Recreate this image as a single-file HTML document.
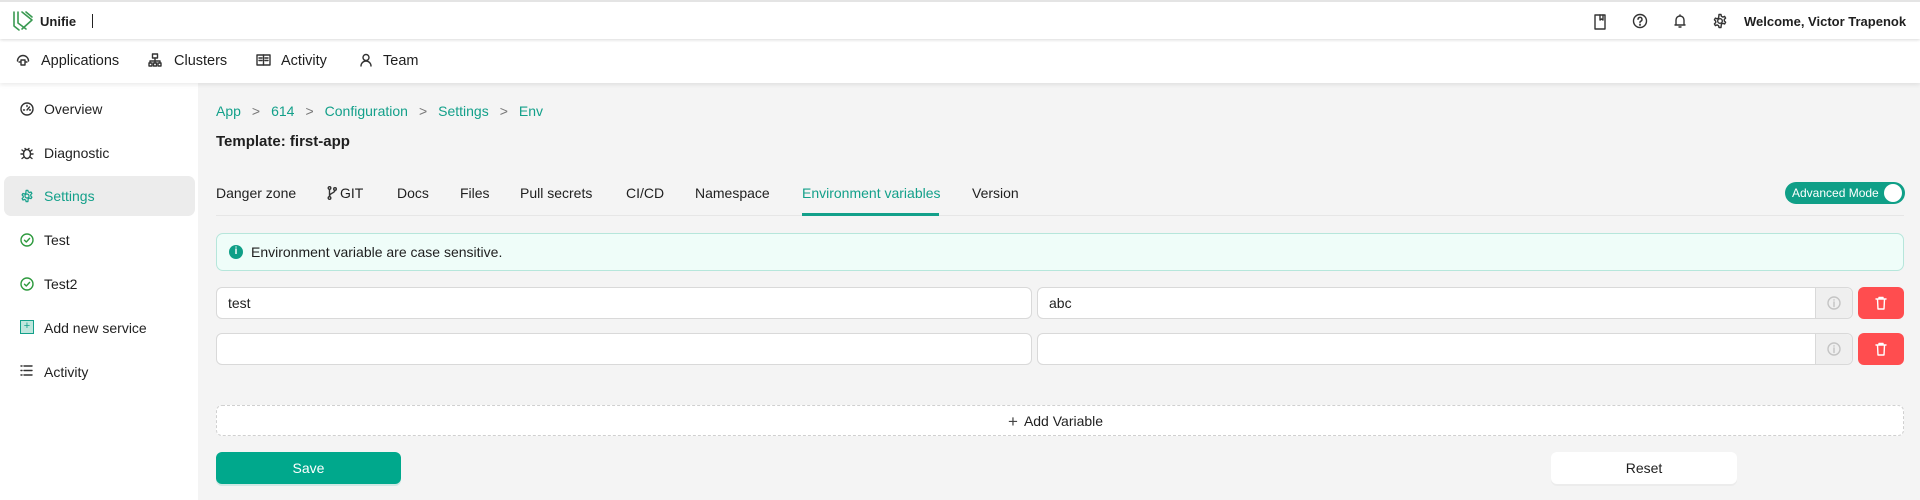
<!DOCTYPE html>
<html><head><meta charset="utf-8"><style>
*{box-sizing:border-box;margin:0;padding:0}
body{width:1920px;height:500px;overflow:hidden;background:#f4f4f4;font-family:"Liberation Sans",Arial,sans-serif;color:#1f1f1f;font-size:14px;position:relative}
.a{position:absolute}
.top{left:0;top:0;width:1920px;height:39px;background:#fff;border-top:2px solid #e4e4e4;box-shadow:0 1px 3px rgba(0,0,0,.15);z-index:3}
.nav{left:0;top:39px;width:1920px;height:44px;background:#fff;box-shadow:0 2px 4px rgba(0,0,0,.08);z-index:2}
.side{left:0;top:83px;width:198px;height:417px;background:#fff}
.t{white-space:nowrap;line-height:1}
.teal{color:#13a08a}
svg{position:absolute;fill:none;stroke:#333;stroke-width:1.4;stroke-linecap:round;stroke-linejoin:round}
.inp{background:#fff;border:1px solid #d9d9d9;border-radius:6px}
</style></head><body>
<div class="a top">
 <svg style="left:12px;top:8px;stroke:#3a9a52;stroke-width:1.6" width="22" height="22" viewBox="0 0 22 22"><path d="M2 2v14l5 4M6 2v11l8 6M10 2l10 8-10 9M14 2l6 5"/></svg>
 <div class="a t" style="left:40px;top:13px;font-weight:bold;font-size:13px">Unifie</div>
 <div class="a" style="left:92px;top:12px;width:1px;height:14px;background:#222"></div>
 <svg style="left:1593px;top:12px" width="14" height="16" viewBox="0 0 14 16"><rect x="2" y="1" width="10" height="14"/><path d="M7 1v5l1.5-1L10 6V1"/></svg>
 <svg style="left:1632px;top:11px" width="16" height="16" viewBox="0 0 16 16"><circle cx="8" cy="8" r="6.5"/><path d="M6 6.3a2 2 0 1 1 2.5 2c-.5.2-.5.6-.5 1.2"/><circle cx="8" cy="11.7" r=".4"/></svg>
 <svg style="left:1672px;top:11px" width="16" height="16" viewBox="0 0 16 16"><path d="M4 12V7a4 4 0 0 1 8 0v5M3 12h10M7 14h2M8 2v1"/></svg>
 <svg style="left:1712px;top:11px" width="16" height="16" viewBox="0 0 16 16"><circle cx="8" cy="8" r="2.3"/><path d="M7 1.5h2l.4 1.8 1.5.8 1.7-.7 1 1.7-1.3 1.3v1.6l1.3 1.3-1 1.7-1.7-.7-1.5.8L9 14.5H7l-.4-1.8-1.5-.8-1.7.7-1-1.7 1.3-1.3V8.1L2.4 6.8l1-1.7 1.7.7 1.5-.8z"/></svg>
 <div class="a t" style="left:1744px;top:13px;font-weight:bold;font-size:13px">Welcome, Victor Trapenok</div>
</div>
<div class="a nav">
 <svg style="left:16px;top:14px" width="14" height="14" viewBox="0 0 14 14"><path d="M1.5 8a5.5 5.5 0 0 1 11 0M3 9h1M10 9h1"/><rect x="5" y="7" width="4" height="5"/></svg>
 <div class="a t" style="left:41px;top:15px;font-size:14.5px">Applications</div>
 <svg style="left:148px;top:14px" width="14" height="14" viewBox="0 0 14 14"><rect x="4.5" y="1" width="5" height="4"/><path d="M7 5v3M2 8h10M2 8v2M12 8v2M7 8v2"/><rect x="1" y="10" width="3" height="3"/><rect x="5.5" y="10" width="3" height="3"/><rect x="10" y="10" width="3" height="3"/></svg>
 <div class="a t" style="left:174px;top:15px;font-size:14.5px">Clusters</div>
 <svg style="left:256px;top:15px" width="15" height="12" viewBox="0 0 15 12"><rect x="1" y="1" width="13" height="10"/><path d="M7.5 1v10M3 4h3M3 6.5h3M9 4h3M9 6.5h3"/></svg>
 <div class="a t" style="left:281px;top:15px;font-size:14.5px">Activity</div>
 <svg style="left:359px;top:14px" width="14" height="14" viewBox="0 0 14 14"><circle cx="7" cy="4.5" r="3"/><path d="M2 13a5 5 0 0 1 10 0"/></svg>
 <div class="a t" style="left:383px;top:15px;font-size:14.5px">Team</div>
</div>
<div class="a side">
 <div class="a" style="left:4px;top:93px;width:191px;height:40px;background:#ececec;border-radius:7px"></div>
 <svg style="left:20px;top:19px" width="14" height="14" viewBox="0 0 14 14"><circle cx="7" cy="7" r="6"/><path d="M7 8l2.5-3M3.5 8h1M9.5 8h1M7 3.5v1"/></svg>
 <div class="a t" style="left:44px;top:19px">Overview</div>
 <svg style="left:20px;top:63px" width="14" height="14" viewBox="0 0 14 14"><ellipse cx="7" cy="8" rx="3.5" ry="4.5"/><path d="M1 8h2.5M10.5 8H13M2 4l2 1.5M12 4l-2 1.5M2 12.5l2-1.5M12 12.5l-2-1.5M5 2.5l1 1M9 2.5l-1 1"/></svg>
 <div class="a t" style="left:44px;top:63px">Diagnostic</div>
 <svg style="left:20px;top:106px;stroke:#13a08a" width="14" height="14" viewBox="0 0 16 16"><circle cx="8" cy="8" r="2.3"/><path d="M7 1.5h2l.4 1.8 1.5.8 1.700-.7 1 1.7-1.3 1.3v1.6l1.3 1.3-1 1.7-1.7-.7-1.5.8L9 14.5H7l-.4-1.8-1.5-.8-1.7.7-1-1.7 1.3-1.3V8.1L2.4 6.8l1-1.7 1.7.7 1.5-.8z"/></svg>
 <div class="a t teal" style="left:44px;top:106px">Settings</div>
 <svg style="left:20px;top:150px;stroke:#2e9a3e" width="14" height="14" viewBox="0 0 14 14"><circle cx="7" cy="7" r="6"/><path d="M4.5 7.2l1.8 1.8 3.3-3.6"/></svg>
 <div class="a t" style="left:44px;top:150px">Test</div>
 <svg style="left:20px;top:194px;stroke:#2e9a3e" width="14" height="14" viewBox="0 0 14 14"><circle cx="7" cy="7" r="6"/><path d="M4.5 7.2l1.8 1.8 3.3-3.6"/></svg>
 <div class="a t" style="left:44px;top:194px">Test2</div>
 <div class="a" style="left:20px;top:237px;width:14px;height:14px;background:#bfe6dd;border:1px solid #13a08a"></div>
 <div class="a t" style="left:20px;top:238px;width:14px;text-align:center;color:#13a08a;font-size:11px">+</div>
 <div class="a t" style="left:44px;top:238px">Add new service</div>
 <svg style="left:20px;top:282px" width="13" height="11" viewBox="0 0 13 11"><path d="M1 1h1M1 5.5h1M1 10h1M4 1h8M4 5.5h8M4 10h8"/></svg>
 <div class="a t" style="left:44px;top:282px">Activity</div>
</div>
<div class="a t" style="left:216px;top:104px;font-size:14px"><span class="teal">App</span><span style="color:#777;margin:0 11px">&gt;</span><span class="teal">614</span><span style="color:#777;margin:0 11px">&gt;</span><span class="teal">Configuration</span><span style="color:#777;margin:0 11px">&gt;</span><span class="teal">Settings</span><span style="color:#777;margin:0 11px">&gt;</span><span class="teal">Env</span></div>
<div class="a t" style="left:216px;top:134px;font-weight:bold;font-size:15px">Template: first-app</div>
<div class="a" style="left:216px;top:215px;width:1688px;height:1px;background:#e6e6e6"></div>
<div class="a t" style="left:216px;top:186px">Danger zone</div>
<svg style="left:327px;top:186px" width="10" height="14" viewBox="0 0 10 14"><circle cx="2.5" cy="2" r="1.3"/><circle cx="2.5" cy="12" r="1.3"/><circle cx="8" cy="3" r="1.3"/><path d="M2.5 3.3v7.4M8 4.3c0 3-5.5 2.5-5.5 6"/></svg>
<div class="a t" style="left:340px;top:186px">GIT</div>
<div class="a t" style="left:397px;top:186px">Docs</div>
<div class="a t" style="left:460px;top:186px">Files</div>
<div class="a t" style="left:520px;top:186px">Pull secrets</div>
<div class="a t" style="left:626px;top:186px">CI/CD</div>
<div class="a t" style="left:695px;top:186px">Namespace</div>
<div class="a t teal" style="left:802px;top:186px">Environment variables</div>
<div class="a" style="left:802px;top:213px;width:137px;height:3px;background:#13a08a"></div>
<div class="a t" style="left:972px;top:186px">Version</div>
<div class="a" style="left:1785px;top:182px;width:120px;height:22px;background:#0f9f87;border-radius:11px"></div>
<div class="a t" style="left:1792px;top:187px;color:#fff;font-size:12px">Advanced Mode</div>
<div class="a" style="left:1884px;top:184px;width:18px;height:18px;background:#fff;border-radius:50%"></div>
<div class="a" style="left:216px;top:233px;width:1688px;height:38px;background:#effdf9;border:1px solid #b6e6db;border-radius:7px"></div>
<div class="a" style="left:229px;top:245px;width:14px;height:14px;border-radius:50%;background:#0f9f87;color:#fff;font-size:10px;font-weight:bold;text-align:center;line-height:14px">i</div>
<div class="a t" style="left:251px;top:245px">Environment variable are case sensitive.</div>
<div class="a inp" style="left:216px;top:287px;width:816px;height:32px"></div>
<div class="a t" style="left:228px;top:296px">test</div>
<div class="a inp" style="left:1037px;top:287px;width:816px;height:32px"></div>
<div class="a" style="left:1815px;top:288px;width:37px;height:30px;background:#efefef;border-left:1px solid #d9d9d9;border-radius:0 6px 6px 0"></div>
<div class="a t" style="left:1049px;top:296px">abc</div>
<div class="a inp" style="left:216px;top:333px;width:816px;height:32px"></div>
<div class="a inp" style="left:1037px;top:333px;width:816px;height:32px"></div>
<div class="a" style="left:1815px;top:334px;width:37px;height:30px;background:#efefef;border-left:1px solid #d9d9d9;border-radius:0 6px 6px 0"></div>
<svg style="left:1827px;top:296px;stroke:#c4c4c4" width="14" height="14" viewBox="0 0 14 14"><circle cx="7" cy="7" r="6"/><path d="M7 6v4.5M7 3.8v.3"/></svg>
<svg style="left:1827px;top:342px;stroke:#c4c4c4" width="14" height="14" viewBox="0 0 14 14"><circle cx="7" cy="7" r="6"/><path d="M7 6v4.5M7 3.8v.3"/></svg>
<div class="a" style="left:1858px;top:287px;width:46px;height:32px;background:#ff4d4f;border-radius:6px"></div>
<div class="a" style="left:1858px;top:333px;width:46px;height:32px;background:#ff4d4f;border-radius:6px"></div>
<svg style="left:1874px;top:296px;stroke:#fff" width="14" height="14" viewBox="0 0 14 14"><path d="M2 3h10M5 3V1.5h4V3M3.5 3l.5 10h6l.5-10"/></svg>
<svg style="left:1874px;top:342px;stroke:#fff" width="14" height="14" viewBox="0 0 14 14"><path d="M2 3h10M5 3V1.5h4V3M3.5 3l.5 10h6l.5-10"/></svg>
<div class="a" style="left:216px;top:405px;width:1688px;height:31px;background:#fff;border:1px dashed #d0d0d0;border-radius:6px"></div>
<div class="a t" style="left:1008px;top:412px"><span style="font-size:17px;color:#444;margin-right:6px;position:relative;top:1px">+</span>Add Variable</div>
<div class="a" style="left:216px;top:452px;width:185px;height:32px;background:#00a88c;border-radius:6px;box-shadow:0 2px 0 rgba(0,168,140,.15)"></div>
<div class="a t" style="left:216px;top:461px;width:185px;text-align:center;color:#fff">Save</div>
<div class="a" style="left:1551px;top:452px;width:186px;height:32px;background:#fff;border-radius:6px;box-shadow:0 2px 0 rgba(0,0,0,.03)"></div>
<div class="a t" style="left:1551px;top:461px;width:186px;text-align:center">Reset</div>
</body></html>
